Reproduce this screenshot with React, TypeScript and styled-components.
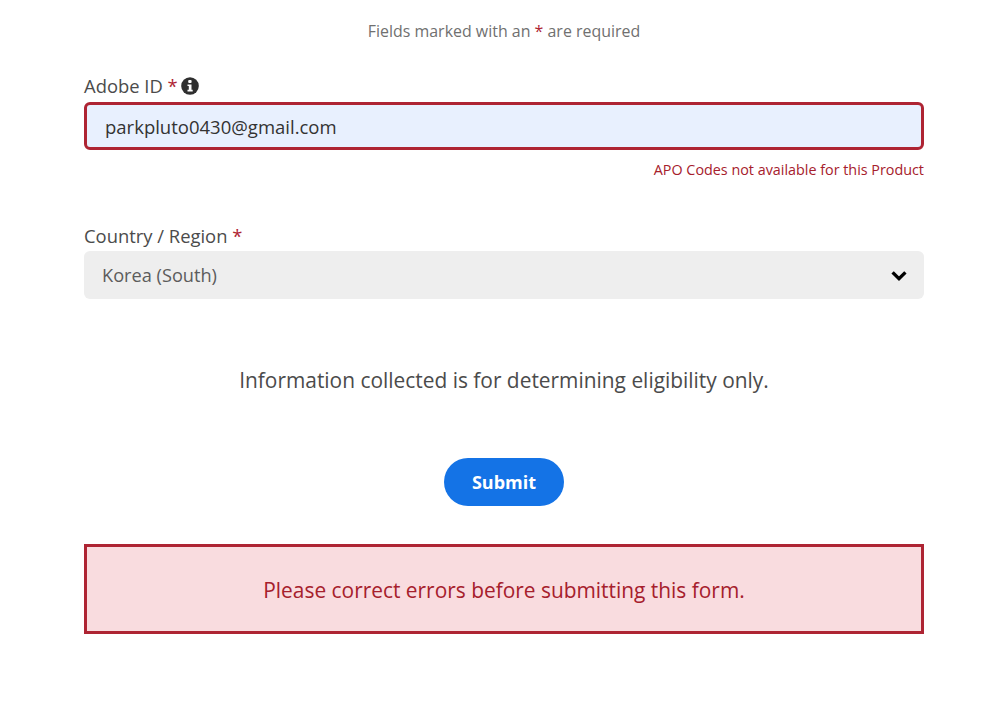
import styled, { createGlobalStyle } from "styled-components";

const GlobalStyle = createGlobalStyle`
  html, body {
    margin: 0;
    padding: 0;
    background: #fff;
    font-family: "Open Sans", "Liberation Sans", sans-serif;
  }
`;

const Page = styled.div`
  width: 981px;
  height: 726px;
  box-sizing: border-box;
  padding: 21px 57px 0 84px;
  overflow: hidden;
`;

const Note = styled.div`
  text-align: center;
  font-size: 15.95px;
  line-height: 20px;
  color: #707070;
`;

const Star = styled.span`
  color: #ae2433;
`;

const Field = styled.div<{ $top: number }>`
  display: flex;
  flex-direction: column;
  margin-top: ${({ $top }) => $top}px;
`;

const Label = styled.label`
  display: flex;
  align-items: center;
  gap: 5px;
  font-size: 18.4px;
  line-height: 24px;
  color: #4b4b4b;
`;

const InfoIcon = styled.svg`
  width: 18px;
  height: 18px;
  margin-left: -2px;
`;

const EmailInput = styled.div`
  box-sizing: border-box;
  height: 48px;
  margin-top: 4px;
  padding: 0 18px;
  display: flex;
  align-items: center;
  background: #e8f0fe;
  border: 3px solid #ae2433;
  border-radius: 6px;
  font-size: 18.5px;
  color: #333333;
`;

const FieldError = styled.div`
  margin-top: 10px;
  text-align: right;
  font-size: 14.35px;
  line-height: 20px;
  color: #a6202c;
`;

const Select = styled.div`
  box-sizing: border-box;
  height: 48px;
  margin-top: 3px;
  padding: 0 17px 0 18px;
  display: flex;
  align-items: center;
  justify-content: space-between;
  background: #eeeeee;
  border-radius: 6px;
  font-size: 18.2px;
  color: #5c5c5c;
`;

const Chevron = styled.svg`
  width: 16px;
  height: 12px;
  margin-top: 2px;
`;

const Disclaimer = styled.div`
  margin-top: 66px;
  text-align: center;
  font-size: 20.9px;
  line-height: 30px;
  color: #4b4b4b;
`;

const Actions = styled.div`
  display: flex;
  justify-content: center;
  margin-top: 63px;
`;

const Submit = styled.button`
  width: 120px;
  height: 48px;
  border: none;
  border-radius: 24px;
  background: #1473e6;
  color: #fff;
  font-family: inherit;
  font-size: 18px;
  font-weight: 700;
`;

const ErrorBanner = styled.div`
  box-sizing: border-box;
  height: 90px;
  margin-top: 38px;
  padding-top: 1px;
  display: flex;
  align-items: center;
  justify-content: center;
  background: #f9dcdf;
  border: 3px solid #ae2433;
  font-size: 20.9px;
  color: #a6202c;
`;

const App = () => {
  return (
    <>
      <GlobalStyle />
      <Page>
        <Note>
          Fields marked with an <Star>*</Star> are required
        </Note>
        <Field $top={33}>
          <Label>
            <span>
              Adobe ID <Star>*</Star>
            </span>
            <InfoIcon viewBox="0 0 18 18">
              <circle cx="9" cy="9" r="8.8" fill="#2f2f2f" />
              <rect x="7.2" y="3" width="3.4" height="3" rx="1" fill="#fff" />
              <path d="M6.5 7.4h4v5.4h1.2v1.7H6.5v-1.7h1.3V9.1H6.5z" fill="#fff" />
            </InfoIcon>
          </Label>
          <EmailInput>parkpluto0430@gmail.com</EmailInput>
          <FieldError>APO Codes not available for this Product</FieldError>
        </Field>
        <Field $top={44}>
          <Label>
            <span>
              Country / Region <Star>*</Star>
            </span>
          </Label>
          <Select>
            <span>Korea (South)</span>
            <Chevron viewBox="0 0 16 12">
              <path d="M1.6 2.4L8 8.6l6.4-6.2" fill="none" stroke="#000" strokeWidth="3.4" />
            </Chevron>
          </Select>
        </Field>
        <Disclaimer>Information collected is for determining eligibility only.</Disclaimer>
        <Actions>
          <Submit>Submit</Submit>
        </Actions>
        <ErrorBanner>Please correct errors before submitting this form.</ErrorBanner>
      </Page>
    </>
  );
};

export default App;
